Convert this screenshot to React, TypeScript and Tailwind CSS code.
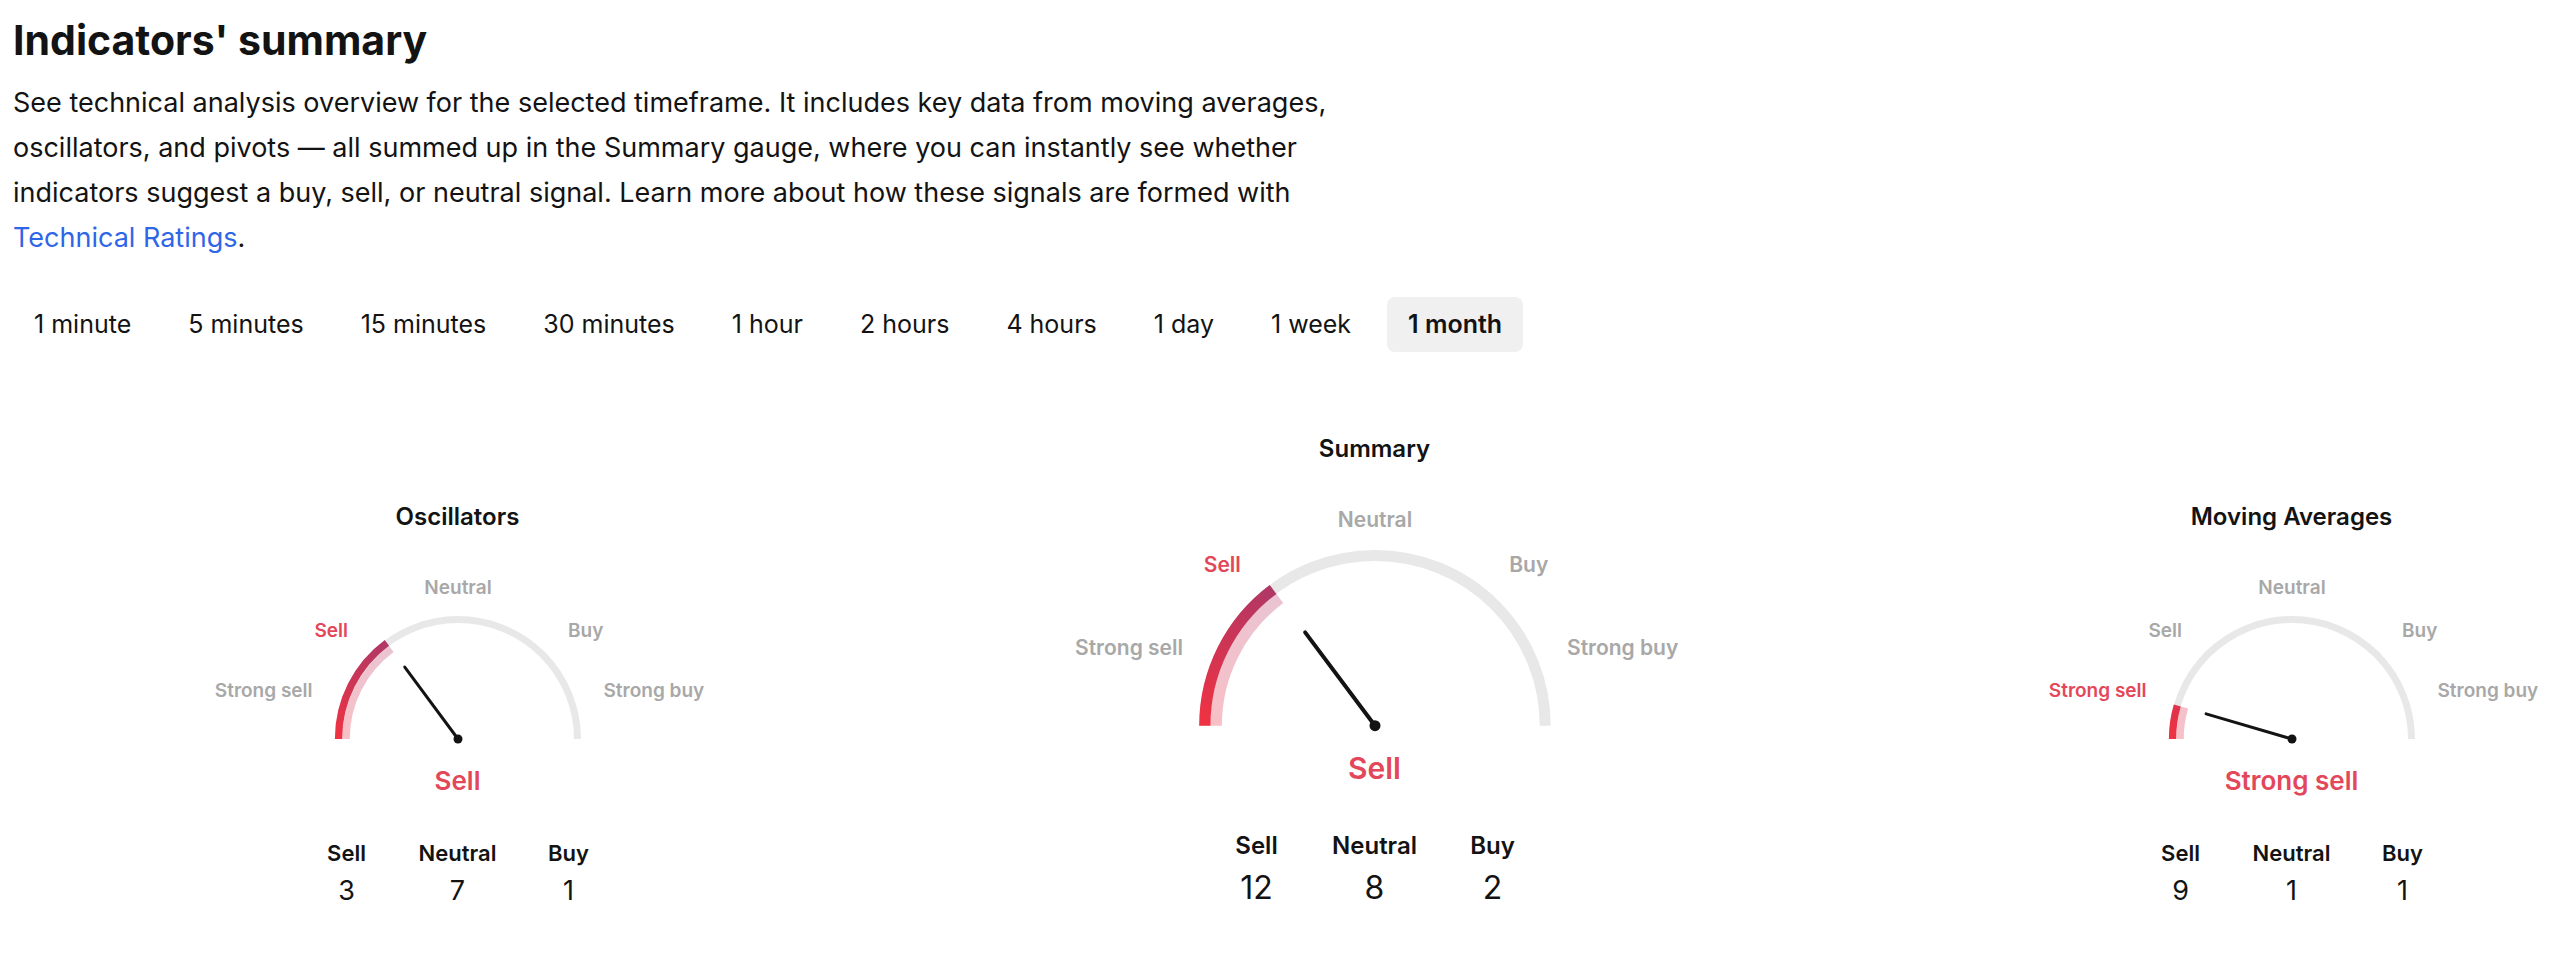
import React from "react";

type Size = {
  w: number;
  h: number;
  cx: number;
  cy: number;
  r: number;
  trackW: number;
  pinkR: number;
  pinkW: number;
  needleLen: number;
  needleW: number;
  dotR: number;
  labelSize: number;
  neutralY: number;
  sideY: number;
  sideDx: number;
  strongY: number;
  strongDx: number;
};

const SMALL: Size = {
  w: 500,
  h: 176,
  cx: 250,
  cy: 169,
  r: 119.5,
  trackW: 7,
  pinkR: 112,
  pinkW: 7.5,
  needleLen: 89.5,
  needleW: 3,
  dotR: 4.5,
  labelSize: 19,
  neutralY: 24.3,
  sideY: 66.7,
  sideDx: 110,
  strongY: 127.3,
  strongDx: 145.5,
};

const LARGE: Size = {
  w: 640,
  h: 235,
  cx: 320,
  cy: 225.7,
  r: 170.2,
  trackW: 11,
  pinkR: 159,
  pinkW: 11.7,
  needleLen: 116.6,
  needleW: 4,
  dotR: 5.5,
  labelSize: 21,
  neutralY: 27.3,
  sideY: 72.3,
  sideDx: 134.2,
  strongY: 155,
  strongDx: 192,
};

const RED = "#e3475a";
const GREY = "#a8a8a8";

// angle is measured in degrees from the left end of the dial, sweeping over the top
function pt(s: Size, r: number, deg: number) {
  const a = (deg * Math.PI) / 180;
  return { x: s.cx - r * Math.cos(a), y: s.cy - r * Math.sin(a) };
}

function arc(s: Size, r: number, from: number, to: number) {
  const p0 = pt(s, r, from);
  const p1 = pt(s, r, to);
  return `M ${p0.x} ${p0.y} A ${r} ${r} 0 0 1 ${p1.x} ${p1.y}`;
}

type Rating = "Strong sell" | "Sell" | "Neutral" | "Buy" | "Strong buy";

function Dial({ s, angle, active, id }: { s: Size; angle: number; active: Rating; id: string }) {
  const g0 = pt(s, s.r, 0);
  const g1 = pt(s, s.r, 60);
  const tip = pt(s, s.needleLen, angle);
  const color = (name: Rating) => (name === active ? RED : GREY);
  return (
    <svg width={s.w} height={s.h} viewBox={`0 0 ${s.w} ${s.h}`} className="block">
      <defs>
        <linearGradient id={`${id}-fill`} gradientUnits="userSpaceOnUse" x1={g0.x} y1={g0.y} x2={g1.x} y2={g1.y}>
          <stop offset="0" stopColor="#f03242" />
          <stop offset="1" stopColor="#a8386a" />
        </linearGradient>
        <linearGradient id={`${id}-soft`} gradientUnits="userSpaceOnUse" x1={g0.x} y1={g0.y} x2={g1.x} y2={g1.y}>
          <stop offset="0" stopColor="#f8c0c6" />
          <stop offset="1" stopColor="#e8c4d4" />
        </linearGradient>
      </defs>
      <path d={arc(s, s.r, 0, 180)} fill="none" stroke="#e8e8e8" strokeWidth={s.trackW} />
      <path d={arc(s, s.pinkR, 0, angle)} fill="none" stroke={`url(#${id}-soft)`} strokeWidth={s.pinkW} />
      <path d={arc(s, s.r, 0, angle)} fill="none" stroke={`url(#${id}-fill)`} strokeWidth={s.trackW + 0.3} />
      <line x1={s.cx} y1={s.cy} x2={tip.x} y2={tip.y} stroke="#131313" strokeWidth={s.needleW} strokeLinecap="round" />
      <circle cx={s.cx} cy={s.cy} r={s.dotR} fill="#131313" />
      <g fontSize={s.labelSize} fontWeight={600}>
        <text x={s.cx} y={s.neutralY} textAnchor="middle" fill={color("Neutral")}>
          Neutral
        </text>
        <text x={s.cx - s.sideDx} y={s.sideY} textAnchor="end" fill={color("Sell")}>
          Sell
        </text>
        <text x={s.cx + s.sideDx} y={s.sideY} textAnchor="start" fill={color("Buy")}>
          Buy
        </text>
        <text x={s.cx - s.strongDx} y={s.strongY} textAnchor="end" fill={color("Strong sell")}>
          Strong sell
        </text>
        <text x={s.cx + s.strongDx} y={s.strongY} textAnchor="start" fill={color("Strong buy")}>
          Strong buy
        </text>
      </g>
    </svg>
  );
}

function SmallGauge({
  title,
  angle,
  rating,
  counts,
  id,
}: {
  title: string;
  angle: number;
  rating: Rating;
  counts: [number, number, number];
  id: string;
}) {
  return (
    <div className="flex flex-col items-center pt-[68px]">
      <h3 className="text-[24px] leading-[32px] font-semibold">{title}</h3>
      <div className="mt-[37px]">
        <Dial s={SMALL} angle={angle} active={rating} id={id} />
      </div>
      <div className="mt-[19px] text-[26px] leading-[32px] font-semibold text-[#e3475a]">{rating}</div>
      <div className="mt-[42px] grid grid-cols-[111px_111px_111px] gap-y-[7px] text-center">
        <div className="text-[22px] leading-[28px] font-semibold">Sell</div>
        <div className="text-[22px] leading-[28px] font-semibold">Neutral</div>
        <div className="text-[22px] leading-[28px] font-semibold">Buy</div>
        <div className="text-[27px] leading-[34px]">{counts[0]}</div>
        <div className="text-[27px] leading-[34px]">{counts[1]}</div>
        <div className="text-[27px] leading-[34px]">{counts[2]}</div>
      </div>
    </div>
  );
}

function SummaryGauge() {
  return (
    <div className="flex flex-col items-center">
      <h3 className="text-[24px] leading-[32px] font-semibold">Summary</h3>
      <div className="mt-[35px]">
        <Dial s={LARGE} angle={53.2} active="Sell" id="summary" />
      </div>
      <div className="mt-[15px] text-[30px] leading-[36px] font-semibold text-[#e3475a]">Sell</div>
      <div className="mt-[45px] grid grid-cols-[118px_118px_118px] gap-y-[8px] text-center">
        <div className="text-[24px] leading-[30px] font-semibold">Sell</div>
        <div className="text-[24px] leading-[30px] font-semibold">Neutral</div>
        <div className="text-[24px] leading-[30px] font-semibold">Buy</div>
        <div className="text-[32px] leading-[38px]">12</div>
        <div className="text-[32px] leading-[38px]">8</div>
        <div className="text-[32px] leading-[38px]">2</div>
      </div>
    </div>
  );
}

const TIMEFRAMES = [
  "1 minute",
  "5 minutes",
  "15 minutes",
  "30 minutes",
  "1 hour",
  "2 hours",
  "4 hours",
  "1 day",
  "1 week",
  "1 month",
];

export default function App() {
  const [frame, setFrame] = React.useState("1 month");
  return (
    <div className="min-h-screen bg-white text-[#131313] font-[family-name:Inter,sans-serif] overflow-hidden">
      <div className="px-[13px] pt-[16px]">
        <h1 className="text-[41px] leading-[48px] font-bold">Indicators' summary</h1>
        <p className="mt-[16px] text-[27px] leading-[45px]">
          See technical analysis overview for the selected timeframe. It includes key data from moving averages,
          <br />
          oscillators, and pivots — all summed up in the Summary gauge, where you can instantly see whether
          <br />
          indicators suggest a buy, sell, or neutral signal. Learn more about how these signals are formed with
          <br />
          <a href="#" className="text-[#2f66e8]">
            Technical Ratings
          </a>
          .
        </p>
        <div className="mt-[37px] flex gap-[15px]">
          {TIMEFRAMES.map((t) => (
            <button
              key={t}
              onClick={() => setFrame(t)}
              className={
                t === frame
                  ? "h-[55px] px-[21px] rounded-[8px] flex items-center text-[25px] font-semibold bg-[#f0f0f0]"
                  : "h-[55px] px-[21px] rounded-[8px] flex items-center text-[25px]"
              }
            >
              {t}
            </button>
          ))}
        </div>
      </div>
      <div className="mt-[81px] overflow-hidden">
        <div className="-ml-[1px] grid grid-cols-[917px_917px_917px] items-start">
          <SmallGauge title="Oscillators" angle={53.5} rating="Sell" counts={[3, 7, 1]} id="osc" />
          <SummaryGauge />
          <SmallGauge title="Moving Averages" angle={16.3} rating="Strong sell" counts={[9, 1, 1]} id="ma" />
        </div>
      </div>
    </div>
  );
}
